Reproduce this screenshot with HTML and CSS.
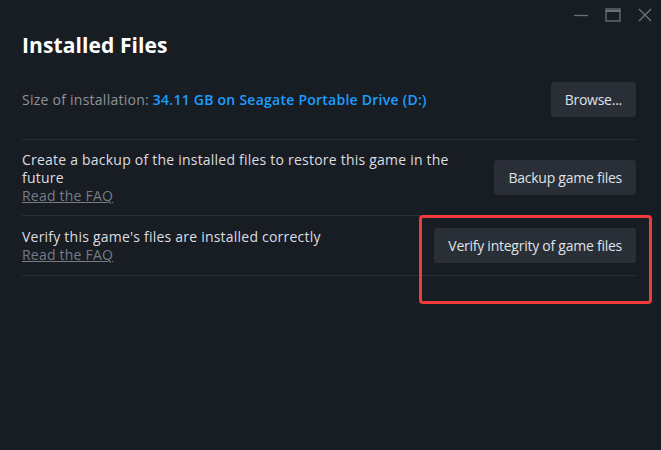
FILE: index.html
```html
<!DOCTYPE html>
<html>
<head>
<meta charset="utf-8">
<link rel="stylesheet" href="styles.css">
</head>
<body>
<div class="window">
  <div class="titlebar">
    <span class="ctl"><svg width="14" height="14" viewBox="0 0 14 14"><line x1="0" y1="7.5" x2="14" y2="7.5" stroke="#6b7079" stroke-width="1.3"/></svg></span>
    <span class="ctl"><svg width="16" height="14" viewBox="0 0 16 14"><rect x="1" y="1" width="14" height="12" fill="none" stroke="#6b7079" stroke-width="1.3"/><line x1="1" y1="3" x2="15" y2="3" stroke="#6b7079" stroke-width="2"/></svg></span>
    <span class="ctl"><svg width="14" height="14" viewBox="0 0 14 14"><path d="M1 1L13 13M13 1L1 13" stroke="#6b7079" stroke-width="1.4"/></svg></span>
  </div>
  <h1 class="title">Installed Files</h1>
  <div class="row size-row">
    <div class="size"><span class="label">Size of installation: </span><span class="value">34.11 GB on Seagate Portable Drive (D:)</span></div>
    <button class="btn">Browse...</button>
  </div>
  <div class="row item backup">
    <div class="desc">
      <div class="text">Create a backup of the installed files to restore this game in the future</div>
      <a class="faq">Read the FAQ</a>
    </div>
    <button class="btn">Backup game files</button>
  </div>
  <div class="row item verify">
    <div class="desc">
      <div class="text">Verify this game's files are installed correctly</div>
      <a class="faq">Read the FAQ</a>
    </div>
    <button class="btn">Verify integrity of game files</button>
    <div class="highlight"></div>
  </div>
</div>
</body>
</html>
```
FILE: styles.css
```css
html, body {
  margin: 0;
  padding: 0;
  background: #181c23;
  width: 661px;
  height: 450px;
  overflow: hidden;
}
.window {
  font-family: "Open Sans", "Noto Sans", sans-serif;
  color: #dcdee1;
  padding: 0 25px 0 22px;
  position: relative;
}
.titlebar {
  height: 30px;
  display: flex;
  justify-content: flex-end;
  align-items: center;
  gap: 17px;
  margin-right: -16px;
}
.ctl {
  display: flex;
  align-items: center;
}
.title {
  margin: 0;
  font-size: 21px;
  line-height: 31px;
  font-weight: 700;
  color: #ffffff;
  letter-spacing: 0.1px;
}
.row {
  display: flex;
  align-items: center;
  justify-content: space-between;
  border-bottom: 1px solid #2a2e36;
  position: relative;
}
.size-row {
  margin-top: 21px;
  padding-bottom: 22px;
}
.size {
  font-size: 14px;
  letter-spacing: 0.25px;
}
.label {
  color: #8d939b;
}
.value {
  color: #1a9fff;
  font-weight: 600;
}
.btn {
  font-family: inherit;
  font-size: 14px;
  letter-spacing: -0.25px;
  color: #dfe2e6;
  background: #2a2e36;
  border: none;
  border-radius: 3px;
  height: 35px;
  padding: 0 14px;
  white-space: nowrap;
  flex-shrink: 0;
}
.desc {
  font-size: 14px;
  line-height: 18px;
  letter-spacing: 0.22px;
  max-width: 460px;
  padding-top: 1px;
}
.text {
  color: #dcdee1;
}
.faq {
  color: #767c85;
  text-decoration: underline;
  display: inline-block;
}
.backup {
  padding: 10px 0 10px;
}
.verify {
  padding: 11px 0 11px;
}
.highlight {
  position: absolute;
  left: 397px;
  top: -1px;
  width: 227px;
  height: 83px;
  border: 3px solid #f23a3a;
  border-radius: 4px;
}
```
